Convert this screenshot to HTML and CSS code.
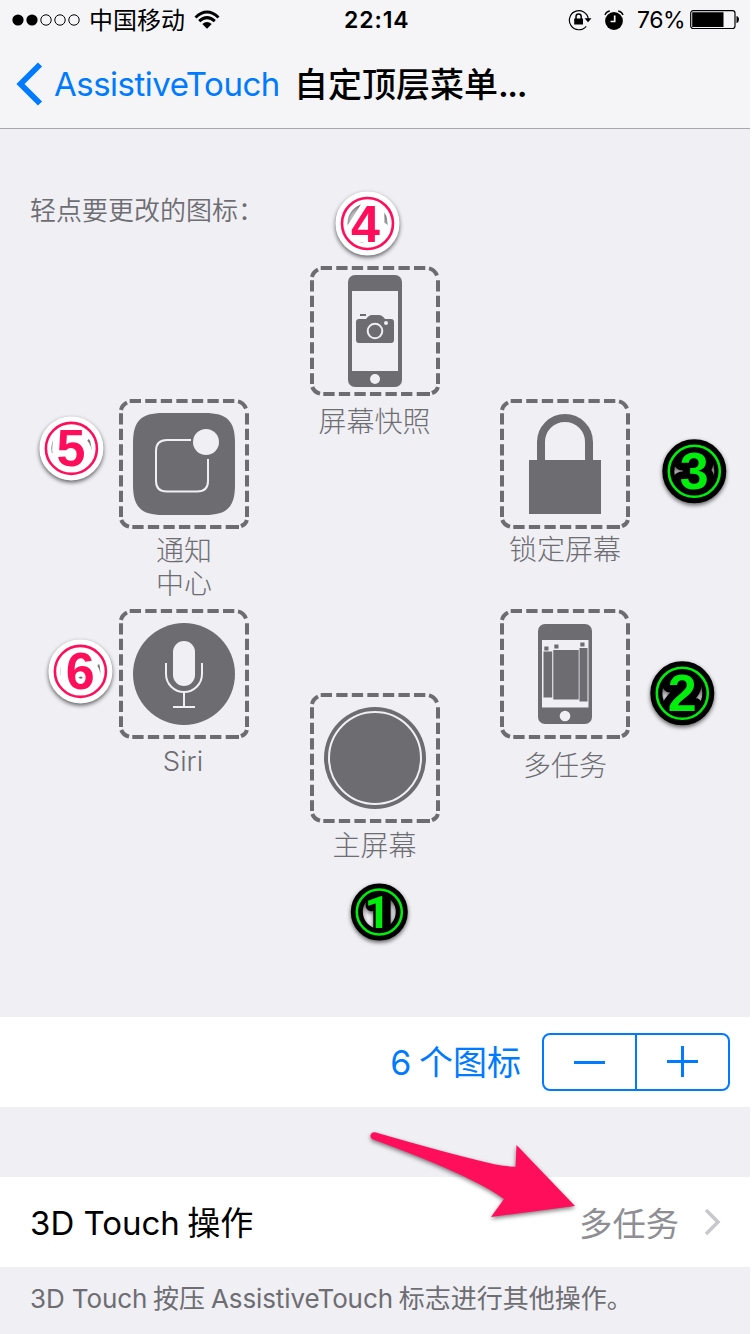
FILE: index.html
```html
<!DOCTYPE html>
<html lang="zh-CN">
<head>
<meta charset="utf-8">
<title>自定顶层菜单</title>
<link rel="stylesheet" href="styles.css">
</head>
<body>
<svg class="defs" width="0" height="0" aria-hidden="true">
  <defs>
    <g id="frame" fill="none" stroke="#6d6c71" stroke-width="4">
      <path d="M10.7 2H116M13.3 128H105" stroke-dasharray="11.3 4.25"/>
      <path d="M2 14.3V118M128 14.3V118" stroke-dasharray="11.3 4.2"/>
      <path d="M106.7 128H120M2 11Q3 6 8 3.4M119 2.4Q124.500 3.500 127 9.500M127.800 121Q127 125 122 127.200M2.300 121Q4 126 10 127.600"/>
    </g>
  </defs>
</svg>
<main class="screen">
  <header class="bar">
    <div class="status">
      <svg class="signal" width="70" height="14" viewBox="0 0 70 14"><circle cx="6" cy="7" r="5.600"/><circle cx="20" cy="7" r="5.600"/><g fill="none" stroke="#000" stroke-width="1"><circle cx="34" cy="7" r="5.200"/><circle cx="48" cy="7" r="5.200"/><circle cx="62" cy="7" r="5.200"/></g></svg>
      <span class="carrier">中国移动</span>
      <svg class="wifi" width="26" height="20" viewBox="0 0 26 20"><path d="M1.500 7.500Q13-3.500 24.500 7.500M5.200 11.200Q13 4 20.800 11.200" fill="none" stroke="#000" stroke-width="3"/><path d="M8.300 14Q13 10 17.700 14L13 18.700Z"/></svg>
      <span class="clock">22:14</span>
      <svg class="rotation" width="24" height="22" viewBox="0 0 24 22"><path d="M20.300 10A9.500 9.500 0 1 0 18.200 17.300" fill="none" stroke="#000" stroke-width="1.200"/><path d="M16.500 9.300H23.500L20 13.200Z"/><path d="M6.200 9.500H15V15.500H6.200Z"/><path d="M8 10V7.500A2.600 2.600 0 0 1 13.200 7.500V10" fill="none" stroke="#000" stroke-width="1.500"/></svg>
      <svg class="alarm" width="20" height="20" viewBox="0 0 20 20"><circle cx="10" cy="11" r="8.900"/><path d="M1 5Q2 1.600 5.800 1M14.200 1Q18 1.600 19 5" fill="none" stroke="#000" stroke-width="1.300"/><path d="M10.700 5.500V11.500H6.500" fill="none" stroke="#f5f5f7" stroke-width="1.700"/></svg>
      <span class="percent">76%</span>
      <svg class="battery" width="50" height="20" viewBox="0 0 50 20"><rect x=".7" y=".7" width="44.300" height="17.800" rx="2.500" fill="none" stroke="#000" stroke-width="1.200"/><path d="M2.200 2.200H33.500V17H2.200ZM46.500 6Q49 6.500 49 9.500T46.500 13.200Z"/></svg>
    </div>
    <nav class="nav">
      <svg class="back" width="28" height="44" viewBox="0 0 28 44"><path d="M25 2.500L5.500 22L25 41.500" fill="none" stroke="#007aff" stroke-width="5.800"/></svg>
      <a class="parent">AssistiveTouch</a>
      <h1 class="title">自定顶层菜单<span class="dots">...</span></h1>
    </nav>
  </header>

  <section class="board">
    <p class="caption">轻点要更改的图标：</p>
    <div class="column left">
      <div class="item">
        <svg class="tile" width="130" height="130"><use href="#frame"/><path fill="#6d6c71" d="M14 44C14 22 22 14 44 14H86C108 14 116 22 116 44V86C116 108 108 116 86 116H44C22 116 14 108 14 86Z"/><path d="M72 41H48Q37 41 37 52V82Q37 92.500 48 92.500H78Q89 92.500 89 82V60" fill="none" stroke="#efeff4" stroke-width="2"/><circle cx="87" cy="43" r="13" fill="#efeff4"/></svg>
        <span class="label notify">通知<br>中心</span>
      </div>
      <div class="item">
        <svg class="tile" width="130" height="130"><use href="#frame"/><circle cx="65" cy="65" r="51" fill="#6d6c71"/><rect x="54" y="32" width="22" height="45" rx="11" fill="#efeff4"/><path d="M47 54V65A18 18 0 0 0 83 65V54M65 83V97M54 98H76" fill="none" stroke="#efeff4" stroke-width="2"/></svg>
        <span class="label siri">Siri</span>
      </div>
    </div>
    <div class="column middle">
      <div class="item">
        <svg class="tile" width="130" height="130"><use href="#frame"/><rect x="38" y="9" width="54" height="112" rx="7" fill="#6d6c71"/><rect x="42" y="25" width="46" height="80" fill="#efeff4"/><circle cx="65" cy="113" r="5" fill="#efeff4"/><path fill="#6d6c71" d="M50 48H56V50H50ZM49 53H56Q59 49 62 49H69Q72 49 75 53H81Q84 53 84 56V74Q84 77 81 77H49Q46 77 46 74V56Q46 53 49 53Z"/><circle cx="65" cy="65" r="7.300" fill="none" stroke="#efeff4" stroke-width="2"/><circle cx="76" cy="57" r="2" fill="#efeff4"/></svg>
        <span class="label capture">屏幕快照</span>
      </div>
      <div class="item">
        <svg class="tile" width="130" height="130"><use href="#frame"/><circle cx="65" cy="65" r="51" fill="#6d6c71"/><circle cx="65" cy="65" r="46" fill="none" stroke="#efeff4" stroke-width="2"/></svg>
        <span class="label home">主屏幕</span>
      </div>
    </div>
    <div class="column right">
      <div class="item">
        <svg class="tile" width="130" height="130"><use href="#frame"/><path d="M29 61H101V115H29Z" fill="#6d6c71"/><path d="M41 62V43A24 24 0 0 1 89 43V62" fill="none" stroke="#6d6c71" stroke-width="8"/></svg>
        <span class="label lock">锁定屏幕</span>
      </div>
      <div class="item">
        <svg class="tile" width="130" height="130"><use href="#frame"/><rect x="38" y="15" width="54" height="100" rx="7" fill="#6d6c71"/><rect x="42" y="31" width="46.500" height="67.500" fill="#efeff4"/><circle cx="65" cy="107" r="5.300" fill="#efeff4"/><path d="M43.500 42.500H52.200V88.500H43.500ZM53.300 41H78.700V90.500H53.300ZM79.500 39H87.500V92.500H79.500ZM44.300 37.500H48.500V41.500H44.300ZM54.300 35.500H58.500V39.500H54.300ZM80.300 33.500H84.500V37.500H80.300Z" fill="#6d6c71"/></svg>
        <span class="label tasks">多任务</span>
      </div>
    </div>

    <svg class="badge pink b4" width="76" height="76" viewBox="-38.500 -37.500 76 76"><g class="outline"><circle r="26"/><text y="18">4</text></g><g class="ink"><circle r="25.500"/><text x="-2" y="18">4</text></g></svg>
    <svg class="badge pink b5" width="76" height="76" viewBox="-38.400 -38.400 76 76"><g class="outline"><circle r="26"/><text y="18">5</text></g><g class="ink"><circle r="25.500"/><text x="-.5" y="18">5</text></g></svg>
    <svg class="badge pink b6" width="76" height="76" viewBox="-38.400 -38.400 76 76"><g class="outline"><circle r="26"/><text y="18">6</text></g><g class="ink"><circle r="25.500"/><text x="-.3" y="18">6</text></g></svg>
    <svg class="badge green b3" width="76" height="76" viewBox="-38.300 -38.300 76 76"><g class="outline"><circle r="26"/><text y="18">3</text></g><g class="ink"><circle r="25.500"/><text y="18">3</text></g></svg>
    <svg class="badge green b2" width="76" height="76" viewBox="-38.300 -38.300 76 76"><g class="outline"><circle r="26"/><text y="18">2</text></g><g class="ink"><circle r="25.500"/><text y="18">2</text></g></svg>
    <svg class="badge green b1" width="76" height="76" viewBox="-38.300 -38 76 76"><g class="outline"><circle r="22.500"/><text x="1" y="16">1</text></g><g class="ink"><circle r="22.500"/><text x="-2" y="16">1</text></g></svg>
  </section>

  <section class="row">
    <span class="count"><span class="latin">6</span> 个图标</span>
    <div class="stepper">
      <button class="step"><svg width="32" height="32" viewBox="0 0 32 32"><path d="M0 16.500H31" stroke="#007aff" stroke-width="3"/></svg></button>
      <button class="step"><svg width="32" height="32" viewBox="0 0 32 32"><path d="M0 15.500H31M15.500 0V31" stroke="#007aff" stroke-width="3"/></svg></button>
    </div>
  </section>

  <section class="row action">
    <span class="name"><span class="latin">3D Touch</span> 操作</span>
    <span class="value">多任务</span>
    <svg class="chevron" width="18" height="28" viewBox="0 0 18 28"><path d="M2 2L14 14L2 26" fill="none" stroke="#c7c7cc" stroke-width="3.500"/></svg>
    <svg class="arrow" width="220" height="100" viewBox="0 0 220 100"><path d="M15 7.300Q90 29 127 37.500Q142 41.500 155.500 41.700L156.500 20L215 81L131 92L144 74Q130 64 113 56Q80 39 12.500 14.300Q10 13 10.500 10Q11.500 6.500 15 7.300Z" fill="#ff0f5b"/></svg>
  </section>

  <p class="footnote"><span class="latin">3D Touch</span> 按压 <span class="latin">AssistiveTouch</span> 标志进行其他操作。</p>
</main>
</body>
</html>
```
FILE: styles.css
```css
* { box-sizing: border-box; margin: 0; padding: 0; }

body {
  background: #fff;
  font-family: "Noto Sans CJK SC", sans-serif;
  color: #000;
}

.defs { position: absolute; }

.screen {
  width: 750px;
  height: 1334px;
  overflow: hidden;
  background: #efeff4;
}

svg { display: block; flex: none; }
span, h1, a { white-space: nowrap; }
.latin { font-family: Inter, sans-serif; }

.bar {
  height: 129px;
  background: #f5f5f7;
  border-bottom: 1px solid #a8a8ac;
}

.status {
  display: flex;
  align-items: center;
  height: 40px;
  padding-left: 12px;
}

.carrier { margin: -2px 0 0 7px; width: 97px; font-size: 24px; line-height: 40px; }
.wifi { margin-left: 8px; }
.clock { margin-left: 124px; width: 67px; font: 600 23px/40px Inter, sans-serif; letter-spacing: 0.9px; }
.rotation { margin-left: 157px; }
.alarm { margin-left: 12px; }
.percent { margin-left: 13px; width: 48px; font: 400 23px/40px Inter, sans-serif; letter-spacing: -0.4px; }
.battery { margin-left: 5px; }

.nav { display: flex; align-items: center; height: 88px; padding-left: 15px; }
.parent { margin-left: 11px; width: 224px; font: 400 33px/44px Inter, sans-serif; letter-spacing: -0.5px; color: #007aff; }
.title { margin-left: 16px; font-size: 34px; line-height: 44px; font-weight: 500; }
.dots { font-family: Inter, sans-serif; font-weight: 600; letter-spacing: -1.5px; }

.board {
  position: relative;
  display: grid;
  grid-template-columns: 130px 130px 130px;
  grid-template-rows: 35px 1fr;
  column-gap: 60.5px;
  height: 888px;
  padding: 63px 0 0 119px;
}

.caption {
  grid-column: 1 / -1;
  margin: -1px 0 0 -89px;
  font-size: 26px;
  line-height: 35px;
  font-weight: 350;
  color: #6d6d72;
}

.column { display: flex; flex-direction: column; }
.left, .right { padding-top: 172px; gap: 15px; }
.middle { padding-top: 39px; }
.middle .item { height: 427px; }
.left .item, .right .item { height: 195px; }
.item { display: flex; flex-direction: column; align-items: center; }
.label { margin-top: 6px; font-size: 28px; line-height: 33px; font-weight: 300; color: #6d6d72; text-align: center; }
.notify { margin-top: 4px; }
.capture { margin-top: 8px; }
.home { margin-top: 5px; }
.lock { margin-top: 3px; }
.tasks { margin-top: 9px; }
.siri { margin-left: -2px; font-family: Inter, sans-serif; font-size: 27.500px; }

.badge { position: absolute; overflow: visible; }
.badge text { font: 700 52px "Liberation Sans", sans-serif; text-anchor: middle; }
.badge .outline circle { fill: none; stroke-width: 12; }
.badge .outline text { stroke-width: 15; stroke-linejoin: round; }
.badge .ink circle { fill: none; stroke-width: 2.6; }
.outline { filter: drop-shadow(0 2px 2px rgba(0, 0, 0, 0.6)); }
.pink .outline { stroke: #fff; fill: #fff; }
.pink .ink { stroke: #ff0f5b; }
.pink .ink text { fill: #ff0f5b; stroke: none; }
.green .outline { stroke: #000; fill: #000; }
.green .ink { stroke: #00ee0b; }
.green .ink text { fill: #00ee0b; stroke: none; }
.b4 { left: 329px; top: 57px; }
.b5 { left: 33px; top: 281px; }
.b6 { left: 42px; top: 504px; }
.b3 { left: 656px; top: 304px; }
.b2 { left: 644px; top: 526px; }
.b1 { left: 341px; top: 745px; }
.b1 text { font-family: Roboto, sans-serif; font-size: 45px; }
.b1 .outline text { stroke-width: 11; }

.row {
  display: flex;
  align-items: center;
  justify-content: flex-end;
  height: 90px;
  padding: 0 20px 0 30px;
  background: #fff;
}

.count { margin-top: -4px; font-size: 34px; color: #007aff; }
.stepper { display: flex; width: 188px; height: 58px; margin-left: 21px; border: 2px solid #007aff; border-radius: 8px; }
.step { display: flex; align-items: center; justify-content: center; flex: 1; border: 0; background: none; }
.step + .step { border-left: 2px solid #007aff; }

.action { position: relative; margin-top: 70px; padding-right: 28px; }
.name { flex: 1; margin-top: -2px; font-size: 33px; }
.value { margin-top: -2px; font-size: 33.300px; color: #8e8e93; }
.chevron { margin-left: 25px; }
.arrow { position: absolute; left: 360px; top: -52px; overflow: visible; filter: drop-shadow(0 2px 2px rgba(0, 0, 0, 0.5)); }

.footnote { padding: 12px 0 0 30px; font-size: 26px; line-height: 36px; white-space: nowrap; color: #6d6d72; }
.footnote .latin { letter-spacing: -0.1px; }
```
